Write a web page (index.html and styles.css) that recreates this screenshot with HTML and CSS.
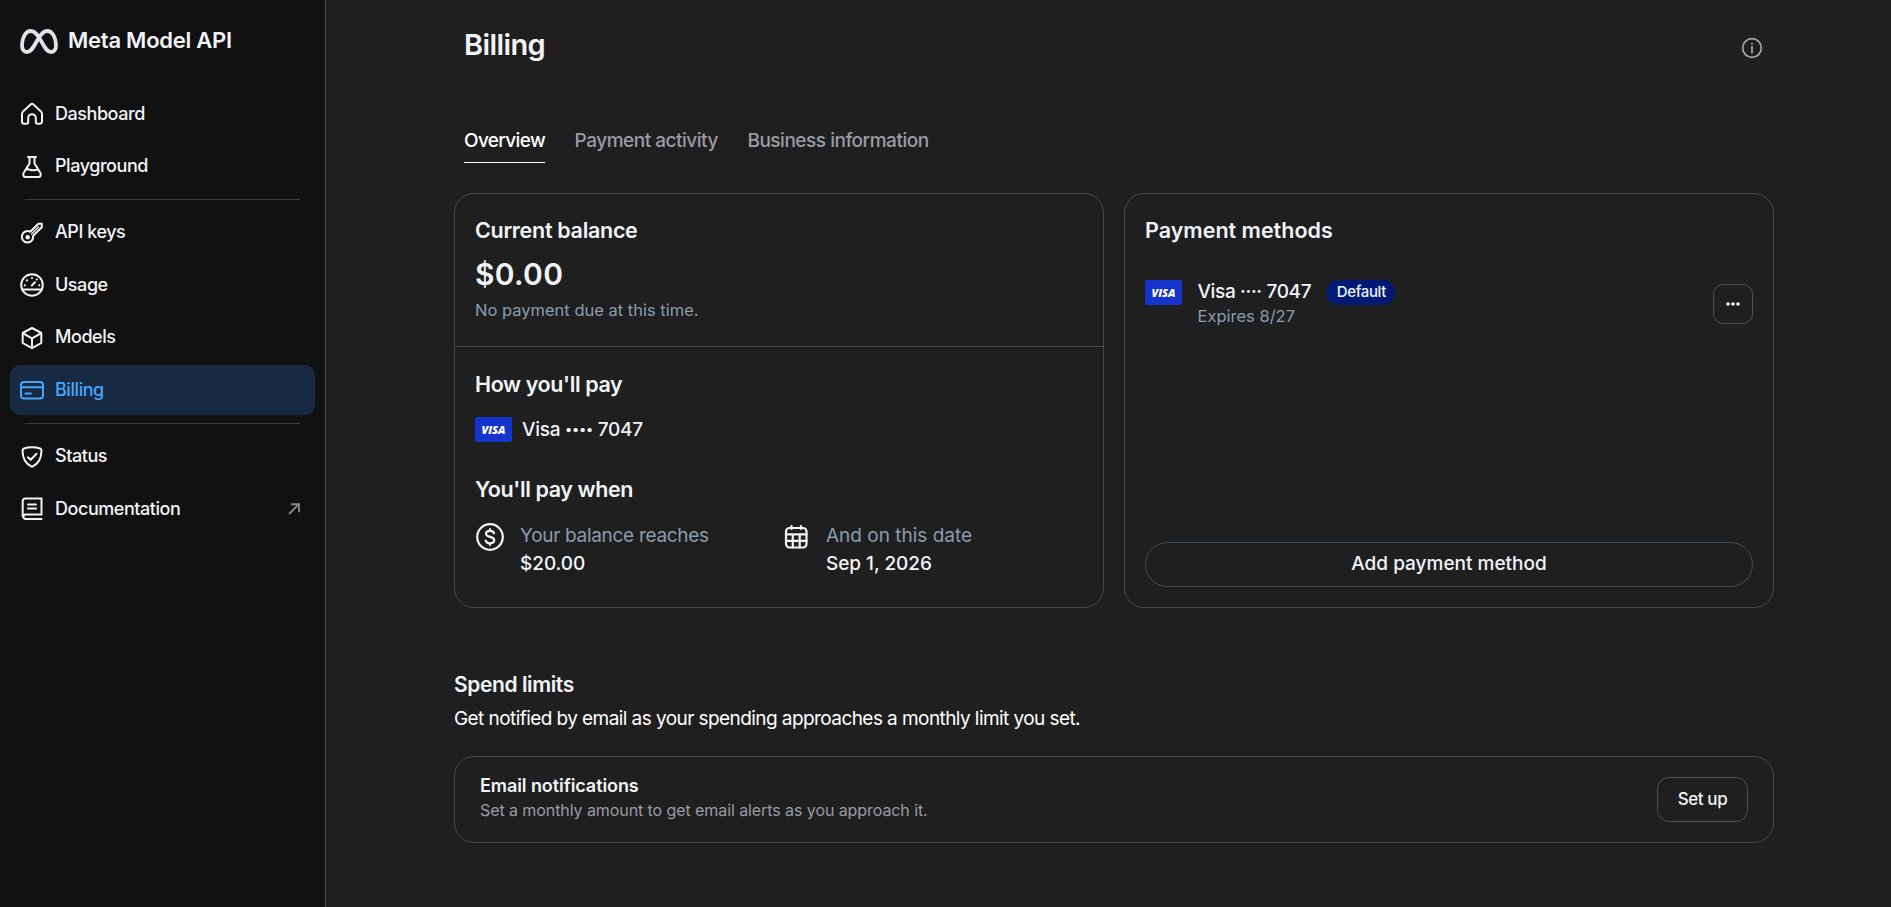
FILE: index.html
```html
<!DOCTYPE html>
<html lang="en">
<head>
    <meta charset="UTF-8">
    <meta name="viewport" content="width=device-width, initial-scale=1.0">
    <title>Billing - Meta Model API</title>
    <link rel="stylesheet" href="styles.css">
</head>
<body>
    <aside class="sidebar">
        <div class="brand">
            <svg class="brand-logo" viewBox="0 0 38 25">
                <path d="M19 8.500C16.500 4.500 14 2 10.800 2C5.500 2 2 9 2 16C2 20.500 3.800 23 6.900 23C10.500 23 12.500 20 16 13.500L19 8.500C21.500 4.500 24 2 27.200 2C32.500 2 36 9 36 16C36 20.500 34.200 23 31.100 23C27.500 23 25.500 20 22 13.500L19 8.500"/>
            </svg>
            <span class="brand-name">Meta Model API</span>
        </div>
        <nav class="nav">
            <a class="nav-item" href="#">
                <svg class="icon" viewBox="0 0 24 24"><path d="M3 9.600L10.600 2.400a2 2 0 0 1 2.800 0L21 9.600q1 1 1 2.400v7.500a2.200 2.200 0 0 1-2.200 2.200h-2.400a1.600 1.600 0 0 1-1.600-1.600V16a3.800 3.800 0 0 0-7.600 0v4.100a1.600 1.600 0 0 1-1.600 1.600H4.200A2.200 2.200 0 0 1 2 19.500V12q0-1.400 1-2.400z"/></svg>
                <span>Dashboard</span>
            </a>
            <a class="nav-item" href="#">
                <svg class="icon" viewBox="0 0 24 24"><path d="M8 2h8M9.500 2v6.500L3.700 17.800c-1.200 2.200-.2 4.200 2 4.200h12.600c2.200 0 3.200-2 2-4.200L14.500 8.500V2M6.200 14.500c3-1 4.200 1 7 .8 1.500 0 2.500-.7 4.500-.6"/></svg>
                <span>Playground</span>
            </a>
            <hr class="nav-divider">
            <a class="nav-item" href="#">
                <svg class="icon" viewBox="0 0 24 24"><path d="M10.300 10.800L18.300 2.800h3.500v3.500l-8.700 8.400a5.700 5.700 0 1 1-2.800-3.900z"/><path d="M18.500 6L11.500 13" stroke-width="1.200"/><circle cx="7.700" cy="16.200" r="1.300" fill="currentColor"/></svg>
                <span>API keys</span>
            </a>
            <a class="nav-item" href="#">
                <svg class="icon" viewBox="0 0 24 24"><circle cx="12" cy="12" r="10.800"/><path d="M2.200 16.500h19.600M11.800 12.500L15 9.300"/><path class="ticks" d="M4.800 12.300h.01M6.900 7.400h.01M12 5h.01M16.800 6.500h.01M19.200 12.300h.01"/></svg>
                <span>Usage</span>
            </a>
            <a class="nav-item" href="#">
                <svg class="icon" viewBox="0 0 24 24"><path d="M12 2l9.300 5v10L12 22.200 2.700 17V7zM2.700 7.200L12 12.300l9.300-5.100M12 12.300v9.700"/></svg>
                <span>Models</span>
            </a>
            <a class="nav-item active" href="#">
                <svg class="icon" viewBox="0 0 24 24"><rect x="1" y="4" width="22" height="16.500" rx="3"/><path d="M1 9.200h22M5.500 15.500H11"/></svg>
                <span>Billing</span>
            </a>
            <hr class="nav-divider">
            <a class="nav-item" href="#">
                <svg class="icon" viewBox="0 0 24 24"><path d="M12 2.200c3.300 0 5.800.5 8 1.300 1 .4 1.500 1.100 1.500 2.100 0 6.400-1.500 12.800-9.500 16.200C4 18.400 2.500 12 2.500 5.600c0-1 .5-1.700 1.500-2.100 2.200-.8 4.700-1.300 8-1.300zM8 12.200l2.700 2.600 5.800-6"/></svg>
                <span>Status</span>
            </a>
            <a class="nav-item" href="#">
                <svg class="icon" viewBox="0 0 24 24"><path d="M21.500 17.500H5a2.400 2.400 0 0 0 0 4.500h16.500M2.700 19.500V4a2.500 2.500 0 0 1 2.500-2.500h16.300v16M8 7.500h8M8 11.500h8"/></svg>
                <span>Documentation</span>
                <svg class="icon-external" viewBox="0 0 12 12"><path d="M1 11L10.200 1.800M3 1.200h8v8"/></svg>
            </a>
        </nav>
    </aside>

    <main class="content">
        <header class="page-header">
            <h1 class="page-title">Billing</h1>
            <svg class="icon-info" viewBox="0 0 22 22"><circle cx="11" cy="11" r="9.300"/><path d="M11 9.600v6.200M11 6.300v.6"/></svg>
        </header>

        <div class="tabs">
            <a class="tab active" href="#">Overview</a>
            <a class="tab" href="#">Payment activity</a>
            <a class="tab" href="#">Business information</a>
        </div>

        <div class="cards">
            <section class="card">
                <div class="balance">
                    <h2 class="card-title">Current balance</h2>
                    <div class="amount">$0.00</div>
                    <div class="balance-note">No payment due at this time.</div>
                </div>
                <div class="pay-info">
                    <h2 class="card-title">How you'll pay</h2>
                    <div class="pay-method">
                        <span class="visa">VISA</span>
                        <span>Visa <span class="bullets">••••</span> 7047</span>
                    </div>
                    <h2 class="card-title">You'll pay when</h2>
                    <div class="pay-when">
                        <div class="when-item">
                            <svg class="icon-when" viewBox="0 0 30 30"><circle cx="15" cy="15" r="12.800"/><path d="M19 11.300c-.4-1.600-1.900-2.500-4-2.500-2.300 0-4 1.100-4 3 0 4.200 8.200 2 8.200 6.300 0 2-1.800 3.200-4.200 3.200-2.300 0-3.900-1-4.300-2.800M15 7v1.500M15 21.500V23"/></svg>
                            <div>
                                <div class="when-label">Your balance reaches</div>
                                <div class="when-value">$20.00</div>
                            </div>
                        </div>
                        <div class="when-item">
                            <svg class="icon-when" viewBox="0 0 30 30"><rect x="5" y="6" width="20.500" height="19.500" rx="3.500"/><path d="M5 12.300h20.500M5 18.800h20.500M11.800 12.300v13M18.700 12.300v13M10.500 4v3M20 4v3"/></svg>
                            <div>
                                <div class="when-label date">And on this date</div>
                                <div class="when-value">Sep 1, 2026</div>
                            </div>
                        </div>
                    </div>
                </div>
            </section>

            <section class="card methods">
                <h2 class="card-title">Payment methods</h2>
                <div class="method">
                    <span class="visa">VISA</span>
                    <div class="method-info">
                        <div class="method-name"><span>Visa ···· 7047</span><span class="badge">Default</span></div>
                        <div class="method-expires">Expires 8/27</div>
                    </div>
                    <button class="more-btn" aria-label="More"><svg viewBox="0 0 14 4"><circle cx="2" cy="2" r="1.800"/><circle cx="7" cy="2" r="1.800"/><circle cx="12" cy="2" r="1.800"/></svg></button>
                </div>
                <button class="add-btn">Add payment method</button>
            </section>
        </div>

        <section class="limits">
            <h2 class="limits-title">Spend limits</h2>
            <p class="limits-text">Get notified by email as your spending approaches a monthly limit you set.</p>
            <div class="card notify">
                <div>
                    <div class="notify-title">Email notifications</div>
                    <div class="notify-text">Set a monthly amount to get email alerts as you approach it.</div>
                </div>
                <button class="setup-btn">Set up</button>
            </div>
        </section>
    </main>
</body>
</html>
```
FILE: styles.css
```css
* {
    box-sizing: border-box;
}

body {
    margin: 0;
    display: flex;
    height: 907px;
    overflow: hidden;
    background-color: #1f1f20;
    color: #f1f4f7;
    font-family: Inter, "Liberation Sans", sans-serif;
    font-size: 19px;
    font-weight: 500;
}

h1, h2, p {
    margin: 0;
}

a {
    color: inherit;
    text-decoration: none;
}

button {
    background: none;
    color: inherit;
    font: inherit;
    padding: 0;
    cursor: pointer;
}

svg {
    fill: none;
    stroke: currentColor;
    stroke-linecap: round;
    stroke-linejoin: round;
    flex-shrink: 0;
}

/* Sidebar */
.sidebar {
    width: 326px;
    flex-shrink: 0;
    background-color: #111111;
    border-right: 1px solid #4a4a4d;
}

.brand {
    display: flex;
    align-items: center;
    gap: 10px;
    height: 83px;
    padding-left: 20px;
}

.brand-logo {
    width: 38px;
    height: 25px;
    stroke: #dfe3ea;
    stroke-width: 3.800;
}

.brand-name {
    font-size: 22px;
    font-weight: 600;
    line-height: 28px;
    letter-spacing: -0.25px;
    padding-bottom: 3px;
}

.nav {
    display: flex;
    flex-direction: column;
    gap: 2.5px;
    padding: 6px 10px 0;
}

.nav-item {
    display: flex;
    align-items: center;
    gap: 11px;
    height: 50px;
    padding: 0 15px 0 10px;
    border-radius: 10px;
    font-size: 18px;
    line-height: 24px;
    letter-spacing: -0.45px;
}

.nav-item span {
    padding-bottom: 1px;
}

.nav-item.active {
    background-color: #182a43;
    color: #47a5fa;
}

.nav-divider {
    width: 275px;
    height: 1px;
    margin: 5.200px 15px;
    border: none;
    background-color: #3c3c3e;
}

.icon {
    width: 24px;
    height: 24px;
    stroke-width: 2;
}

.ticks {
    stroke-width: 2.200;
}

.icon-external {
    width: 12px;
    height: 12px;
    margin-left: auto;
    stroke: #84868c;
    stroke-width: 1.900;
    stroke-linecap: butt;
    stroke-linejoin: miter;
}

/* Page header and tabs */
.content {
    flex: 1;
    padding: 25px 117px 0 128px;
}

.page-header {
    display: flex;
    justify-content: space-between;
    align-items: center;
    height: 45px;
    padding: 0 11px 0 10px;
}

.page-title {
    font-size: 29px;
    font-weight: 600;
    line-height: 40px;
    letter-spacing: -0.6px;
    padding-bottom: 5px;
}

.icon-info {
    width: 22px;
    height: 22px;
    color: #a3a8ae;
    stroke-width: 1.700;
}

.tabs {
    display: flex;
    gap: 29.500px;
    margin-top: 57px;
    padding-left: 10px;
}

.tab {
    height: 36px;
    line-height: 27px;
    letter-spacing: -0.48px;
    color: #9a9ca1;
}

.tab.active {
    color: #ffffff;
    letter-spacing: -0.65px;
    border-bottom: 1px solid #ffffff;
}

/* Cards */
.cards {
    display: flex;
    gap: 20px;
    margin-top: 30px;
}

.card {
    border: 1px solid #47484c;
    border-radius: 20px;
}

.cards .card {
    width: 650px;
    height: 415px;
}

.card-title {
    font-size: 21.500px;
    font-weight: 600;
    line-height: 27px;
    letter-spacing: -0.3px;
}

.pay-info .card-title {
    letter-spacing: -0.39px;
}

.methods .card-title {
    letter-spacing: 0;
}

.balance {
    height: 153px;
    padding: 23px 20px 0;
    border-bottom: 1px solid #3f4c59;
}

.amount {
    margin-top: 12px;
    font-size: 30px;
    font-weight: 600;
    line-height: 36px;
    letter-spacing: 0.3px;
}

.balance-note {
    margin-top: 6px;
    color: #8a9cab;
    font-size: 16.500px;
    font-weight: 400;
    line-height: 25px;
}

.pay-info {
    padding: 24px 20px 0;
    line-height: 27px;
}

.pay-method {
    display: flex;
    align-items: center;
    gap: 10px;
    height: 25px;
    margin: 19px 0 34px;
    letter-spacing: -0.25px;
}

.bullets {
    font-size: 13.500px;
    line-height: 1;
    vertical-align: 2px;
}

.visa {
    width: 37px;
    height: 25px;
    border-radius: 2px;
    background-color: #1434cb;
    color: #ffffff;
    font-family: "Open Sans", sans-serif;
    font-size: 11px;
    font-style: italic;
    font-weight: 800;
    letter-spacing: 0;
    line-height: 25px;
    text-align: center;
}

.pay-when {
    display: flex;
    margin-top: 19px;
}

.when-item {
    display: flex;
    flex-shrink: 0;
    gap: 15px;
    width: 306px;
}

.icon-when {
    width: 30px;
    height: 30px;
    stroke-width: 2.200;
}

.when-label {
    color: #8a9cab;
    font-weight: 400;
    letter-spacing: -0.3px;
}

.when-label.date {
    letter-spacing: 0;
}

.when-value {
    margin-top: 1px;
    letter-spacing: -0.05px;
}

/* Payment methods */
.methods {
    display: flex;
    flex-direction: column;
    padding: 23px 20px 20px;
}

.method {
    display: flex;
    gap: 15.500px;
    margin-top: 36px;
}

.method-info {
    flex: 1;
}

.method-name {
    display: flex;
    align-items: center;
    gap: 14.500px;
    height: 25px;
    line-height: 23px;
    letter-spacing: -0.35px;
}

.method-name > span:first-child {
    padding-bottom: 2px;
}

.badge {
    height: 25px;
    padding: 0 9px 0 11px;
    border-radius: 13px;
    background-color: #001a75;
    font-size: 15px;
    line-height: 24px;
}

.method-expires {
    color: #8a9cab;
    font-size: 16.500px;
    font-weight: 400;
    line-height: 23px;
}

.more-btn {
    display: flex;
    align-items: center;
    justify-content: center;
    width: 40px;
    height: 40px;
    margin-top: 4px;
    border: 1px solid #4c5057;
    border-radius: 10px;
}

.more-btn svg {
    width: 14px;
    height: 4px;
    fill: currentColor;
    stroke: none;
}

.add-btn {
    height: 45px;
    margin-top: auto;
    border: 1px solid #3f4c59;
    border-radius: 23px;
    line-height: 27px;
    padding-bottom: 3px;
}

/* Spend limits */
.limits {
    margin-top: 63px;
}

.limits-title {
    font-size: 21px;
    font-weight: 600;
    line-height: 28px;
    letter-spacing: -0.4px;
}

.limits-text {
    margin-top: 6px;
    line-height: 27px;
    font-weight: 400;
    letter-spacing: -0.57px;
    color: #ffffff;
}

.notify {
    display: flex;
    justify-content: space-between;
    align-items: flex-start;
    height: 87px;
    margin-top: 24px;
    padding: 16px 25px 0;
}

.notify-title {
    font-size: 18px;
    font-weight: 600;
    line-height: 25px;
    letter-spacing: -0.08px;
}

.notify-text {
    color: #9a9ca1;
    font-size: 16px;
    font-weight: 400;
    line-height: 25px;
    letter-spacing: -0.08px;
}

.setup-btn {
    width: 91px;
    height: 45px;
    margin-top: 4px;
    border: 1px solid #4c5057;
    border-radius: 12px;
    font-size: 17px;
    line-height: 24px;
    letter-spacing: -0.42px;
    padding-bottom: 2px;
}
```
